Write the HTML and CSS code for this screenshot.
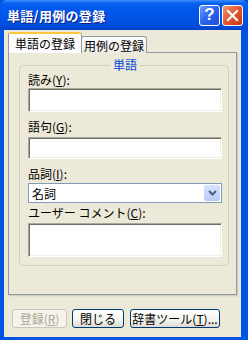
FILE: index.html
```html
<!DOCTYPE html>
<html lang="ja">
<head>
    <meta charset="UTF-8">
    <title>単語/用例の登録</title>
    <link rel="stylesheet" href="styles.css">
</head>
<body>
    <div class="window">
        <div class="titlebar">
            <span class="title">単語/用例の登録</span>
            <div class="caption-btn help">?</div>
            <div class="caption-btn close">
                <svg width="13" height="13" viewBox="0 0 13 13">
                    <path d="M2 2 L11 11 M11 2 L2 11" stroke="#fff" stroke-width="2.2" stroke-linecap="square"/>
                </svg>
            </div>
        </div>

        <div class="client">
            <div class="tabs">
                <div class="tab active">単語の登録</div>
                <div class="tab">用例の登録</div>
            </div>

            <div class="panel">
                <fieldset class="group">
                    <legend>単語</legend>

                    <label class="lbl first">読み(<u>Y</u>):</label>
                    <div class="edit tall"></div>

                    <label class="lbl second">語句(<u>G</u>):</label>
                    <div class="edit"></div>

                    <label class="lbl third">品詞(<u>I</u>):</label>
                    <div class="combo">
                        <span>名詞</span>
                        <div class="drop">
                            <svg width="9" height="6" viewBox="0 0 9 6">
                                <path d="M1 1 L4.5 4.5 L8 1" stroke="#4d6185" stroke-width="2" fill="none"/>
                            </svg>
                        </div>
                    </div>

                    <label class="lbl fourth">ユーザー コメント(<u>C</u>):</label>
                    <div class="edit memo"></div>
                </fieldset>
            </div>

            <div class="buttons">
                <button class="btn disabled">登録(<u>R</u>)</button>
                <button class="btn close-btn">閉じる</button>
                <button class="btn tool">辞書ツール(<u>T</u>)...</button>
            </div>
        </div>
    </div>
</body>
</html>
```

FILE: styles.css
```css
body {
    margin: 0;
    font-family: "Noto Sans CJK JP", "DejaVu Sans", sans-serif;
    font-size: 12px;
    background: #fff;
}
.window {
    width: 248px;
    height: 340px;
    box-sizing: border-box;
    display: flex;
    flex-direction: column;
    background: #0054e3;
}
.titlebar {
    height: 30px;
    flex: none;
    display: flex;
    align-items: center;
    padding: 0 5px 0 7px;
    border-radius: 7px 7px 0 0;
    background: linear-gradient(#3d8fff 0px, #0a62f0 3px, #0058ee 8px, #0054e3 20px, #0049d6 28px, #003fc4 30px);
    color: #fff;
}
.title {
    flex: 1;
    font-size: 13px;
    font-weight: bold;
    text-shadow: 1px 1px #0a1e8c;
    letter-spacing: 0.3px;
}
.caption-btn {
    width: 19px;
    height: 19px;
    border: 1px solid #fff;
    border-radius: 3px;
    display: flex;
    align-items: center;
    justify-content: center;
    color: #fff;
    font-family: "Liberation Sans", sans-serif;
    font-weight: bold;
    font-size: 17px;
}
.help {
    margin-right: 2px;
    background: linear-gradient(135deg, #6a9bff, #2a64ee 50%, #1b4fdb);
}
.close {
    background: linear-gradient(135deg, #f29a78, #e1552e 50%, #c8381a);
}
.client {
    flex: 1;
    margin: 0 7px 3px 4px;
    background: #ece9d8;
    display: flex;
    flex-direction: column;
    padding: 3px 4px 0 4px;
}
.tabs {
    display: flex;
    align-items: flex-end;
    height: 20px;
    flex: none;
    position: relative;
    z-index: 1;
    margin-bottom: -1px;
}
.tab {
    height: 16px;
    padding: 0 2px;
    display: flex;
    align-items: center;
    border: 1px solid #919b9c;
    border-bottom: none;
    border-radius: 3px 3px 0 0;
    background: linear-gradient(#fefefe, #ecebe6);
    color: #000;
}
.tab.active {
    height: 19px;
    padding: 0 6px;
    border-top: 2px solid #ffc83c;
    background: #fcfcfe;
    margin-right: -1px;
}
.panel {
    height: 243px;
    flex: none;
    box-sizing: border-box;
    border: 1px solid #919b9c;
    box-shadow: 1px 1px 0 #d0cfc6, 2px 2px 0 #e3e1d6;
    background: #ece9d8;
    padding: 5px 7px 0 10px;
}
.group {
    margin: 0;
    height: 208px;
    box-sizing: border-box;
    border: 1px solid #d0d0bf;
    border-radius: 4px;
    padding: 0 6px 0 8px;
    display: flex;
    flex-direction: column;
}
.group legend {
    margin: 0 auto;
    padding: 0 3px;
    color: #0046d5;
    font-size: 12px;
    line-height: 14px;
}
.lbl {
    display: block;
    line-height: 14px;
    height: 14px;
}
.lbl.first { margin-top: 1px; margin-bottom: 1px; }
.lbl.second { margin-top: 8px; margin-bottom: 3px; }
.lbl.third { margin-top: 8px; margin-bottom: 2px; }
.lbl.fourth { margin-top: 3px; margin-bottom: 3px; }
.edit {
    height: 20px;
    flex: none;
    background: #fff;
    border-top: 1px solid #aca899;
    border-left: 1px solid #aca899;
    border-right: 1px solid #fff;
    border-bottom: 1px solid #fff;
    box-shadow: inset 1px 1px 0 #716f64, inset -1px -1px 0 #f1efe2;
}
.edit.tall { height: 22px; }
.edit.memo { height: 32px; }
.combo {
    height: 18px;
    flex: none;
    border: 1px solid #7f9db9;
    background: #fff;
    display: flex;
    align-items: center;
    padding: 0 1px 0 3px;
}
.combo span {
    flex: 1;
}
.drop {
    width: 16px;
    height: 16px;
    border-radius: 2px;
    background: linear-gradient(#d7e2fd, #b8ccf8);
    display: flex;
    align-items: center;
    justify-content: center;
}
.buttons {
    display: flex;
    align-items: flex-start;
    margin-top: 14px;
    padding-left: 4px;
}
.btn {
    height: 19px;
    padding: 0;
    margin-right: 5px;
    font-family: "Noto Sans CJK JP", sans-serif;
    font-size: 12px;
    line-height: 15px;
    white-space: nowrap;
    border: 1px solid #003c74;
    border-radius: 3px;
    background: linear-gradient(#ffffff, #f4f3ee 60%, #dcdad0);
    color: #000;
}
.btn.disabled {
    width: 55px;
    border-color: #c9c7ba;
    background: #f5f4ea;
    color: #aca899;
}
.btn.close-btn { width: 52px; }
.btn.tool { width: 90px; margin-left: 1px; }
```
